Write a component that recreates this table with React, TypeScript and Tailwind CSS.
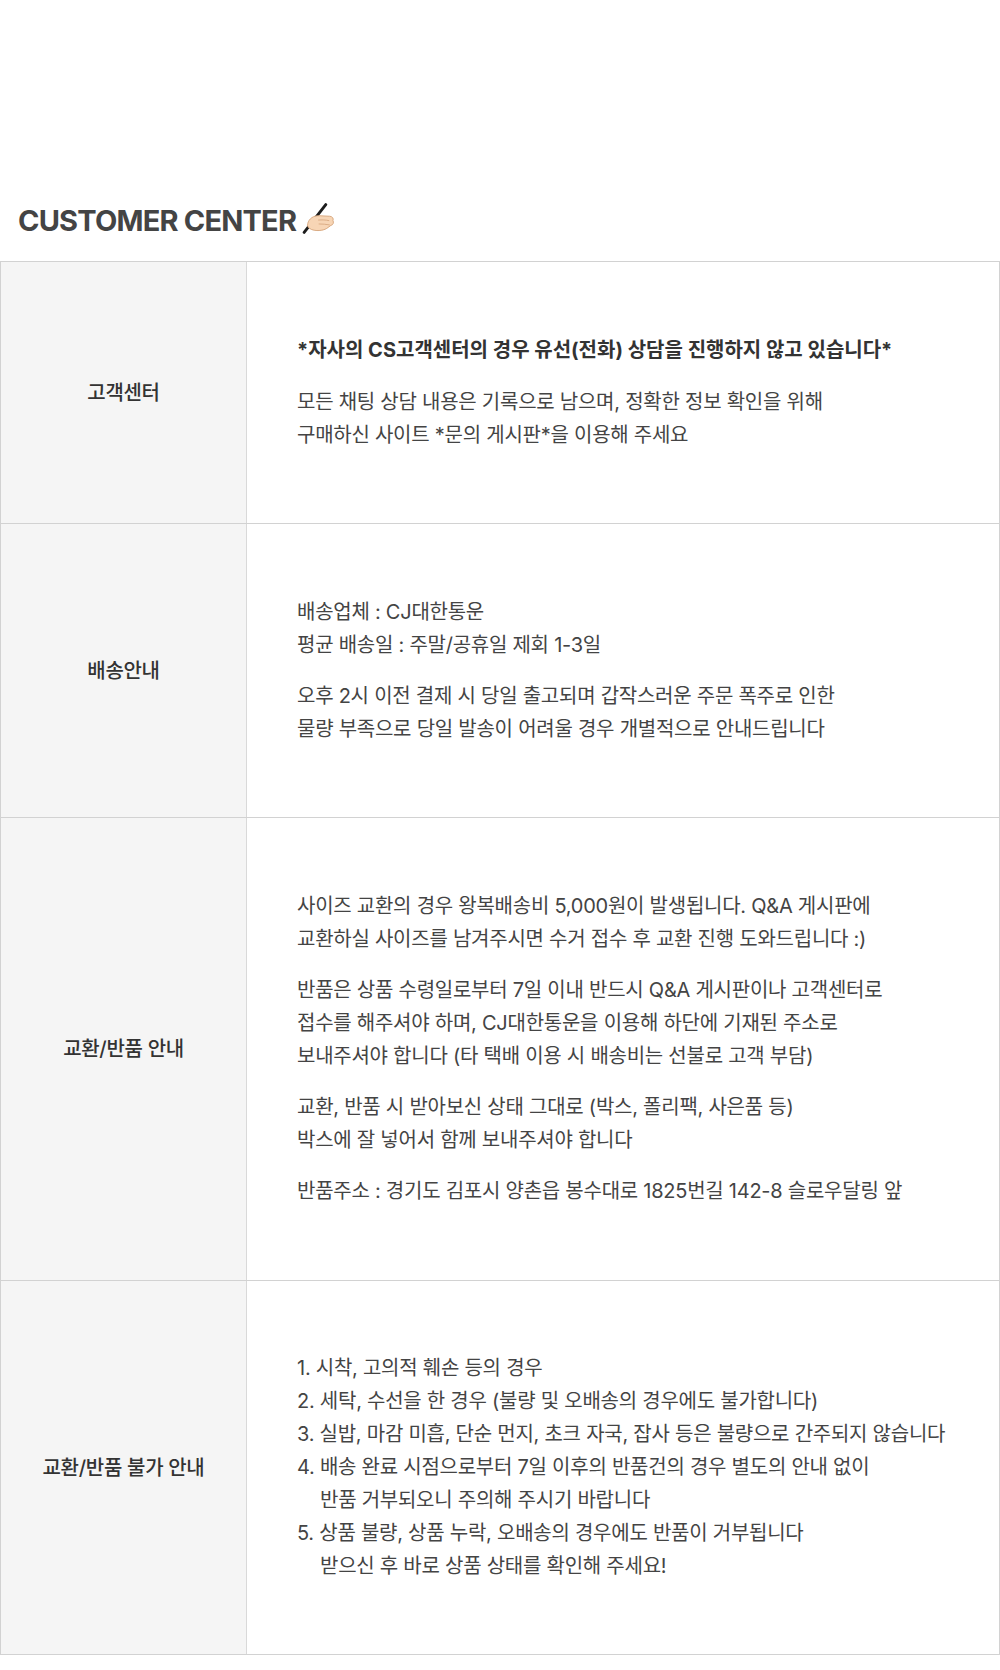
import React from "react";

type Row = {
  label: string;
  body: React.ReactNode;
  pad?: string;
};

const FONT = "font-['Inter','Noto_Sans_CJK_KR',sans-serif]";

// Writing hand emoji (light skin tone), drawn since no emoji font is available
const WritingHand: React.FC = () => (
  <svg
    width="35"
    height="31"
    viewBox="0 0 34 30"
    className="inline-block ml-[3px] -mt-[4px]"
  >
    <path
      d="M26 1.5 L5 28.5"
      stroke="#1c1c1c"
      strokeWidth="2.8"
      strokeLinecap="round"
    />
    <path
      d="M8.5 20 C9.5 15 14.5 12 19.5 12.3 L29.8 12.8 C32.5 13 33.8 15 33 17 C34 18.8 33.2 21.3 31 21.7 L27 24.6 C23 27.1 16 27.3 12 25.6 C9 24.4 7.8 22.2 8.5 20 Z"
      fill="#f7d5b5"
      stroke="#d6a57c"
      strokeWidth="0.9"
    />
    <path
      d="M19 16.5 C22.5 16.2 25.5 16.4 29 17 M19.5 20.3 C23 20.3 26 20.6 29.5 21.2"
      stroke="#d6a57c"
      strokeWidth="0.8"
      fill="none"
      strokeLinecap="round"
    />
  </svg>
);

const Para: React.FC<{ lines: string[]; bold?: boolean }> = ({
  lines,
  bold,
}) => (
  <div
    className={
      bold ? "font-bold tracking-normal text-[#333] mb-[1px]" : "text-[#444]"
    }
  >
    {lines.map((line) => (
      <p key={line}>{line}</p>
    ))}
  </div>
);

const rows: Row[] = [
  {
    label: "고객센터",
    body: (
      <>
        <Para
          bold
          lines={["*자사의 CS고객센터의 경우 유선(전화) 상담을 진행하지 않고 있습니다*"]}
        />
        <Para
          lines={[
            "모든 채팅 상담 내용은 기록으로 남으며, 정확한 정보 확인을 위해",
            "구매하신 사이트 *문의 게시판*을 이용해 주세요",
          ]}
        />
      </>
    ),
    pad: "pt-[72px] pb-[71px]",
  },
  {
    label: "배송안내",
    body: (
      <>
        <Para
          lines={["배송업체 : CJ대한통운", "평균 배송일 : 주말/공휴일 제회 1-3일"]}
        />
        <Para
          lines={[
            "오후 2시 이전 결제 시 당일 출고되며 갑작스러운 주문 폭주로 인한",
            "물량 부족으로 당일 발송이 어려울 경우 개별적으로 안내드립니다",
          ]}
        />
      </>
    ),
    pad: "pt-[72px] pb-[71px]",
  },
  {
    label: "교환/반품 안내",
    body: (
      <>
        <Para
          lines={[
            "사이즈 교환의 경우 왕복배송비 5,000원이 발생됩니다. Q&A 게시판에",
            "교환하실 사이즈를 남겨주시면 수거 접수 후 교환 진행 도와드립니다 :)",
          ]}
        />
        <Para
          lines={[
            "반품은 상품 수령일로부터 7일 이내 반드시 Q&A 게시판이나 고객센터로",
            "접수를 해주셔야 하며, CJ대한통운을 이용해 하단에 기재된 주소로",
            "보내주셔야 합니다 (타 택배 이용 시 배송비는 선불로 고객 부담)",
          ]}
        />
        <Para
          lines={[
            "교환, 반품 시 받아보신 상태 그대로 (박스, 폴리팩, 사은품 등)",
            "박스에 잘 넣어서 함께 보내주셔야 합니다",
          ]}
        />
        <Para
          lines={[
            "반품주소 : 경기도 김포시 양촌읍 봉수대로 1825번길 142-8 슬로우달링 앞",
          ]}
        />
      </>
    ),
  },
];

const notAllowed: { text: string; more?: string }[] = [
  { text: "1. 시착, 고의적 훼손 등의 경우" },
  { text: "2. 세탁, 수선을 한 경우 (불량 및 오배송의 경우에도 불가합니다)" },
  {
    text: "3. 실밥, 마감 미흡, 단순 먼지, 초크 자국, 잡사 등은 불량으로 간주되지 않습니다",
  },
  {
    text: "4. 배송 완료 시점으로부터 7일 이후의 반품건의 경우 별도의 안내 없이",
    more: "반품 거부되오니 주의해 주시기 바랍니다",
  },
  {
    text: "5. 상품 불량, 상품 누락, 오배송의 경우에도 반품이 거부됩니다",
    more: "받으신 후 바로 상품 상태를 확인해 주세요!",
  },
];

const TableRow: React.FC<Row> = ({ label, body, pad = "py-[72px]" }) => (
  <div className="flex border-b border-[#d2d2d2]">
    <div className="w-[246px] shrink-0 bg-[#f5f5f5] border-r border-[#d9d9d9] flex items-center justify-center">
      <span className="text-[20px] font-medium tracking-[-0.3px] text-[#333]">
        {label}
      </span>
    </div>
    <div
      className={`flex-1 pl-[50px] pr-6 ${pad} text-[20px] tracking-[-0.25px] leading-[33px] flex flex-col gap-[18px]`}
    >
      {body}
    </div>
  </div>
);

export default function App() {
  return (
    <div className={`${FONT} bg-white min-h-[1670px] w-[1000px]`}>
      <div className="pt-[203px] pl-[18px] mb-[23px]">
        <h2 className="font-['Inter',sans-serif] text-[29px] leading-[35px] font-bold tracking-[-0.8px] text-[#444] flex items-center">
          CUSTOMER CENTER
          <WritingHand />
        </h2>
      </div>

      {/* Customer center table */}
      <div className="border-t border-l border-r border-[#d2d2d2]">
        {rows.map((row) => (
          <TableRow key={row.label} {...row} />
        ))}
        <TableRow
          label="교환/반품 불가 안내"
          pad="py-[71px]"
          body={
            <div className="text-[#444]">
              {notAllowed.map((item) => (
                <div key={item.text}>
                  <p>{item.text}</p>
                  {item.more && <p className="pl-[23px]">{item.more}</p>}
                </div>
              ))}
            </div>
          }
        />
      </div>
    </div>
  );
}
